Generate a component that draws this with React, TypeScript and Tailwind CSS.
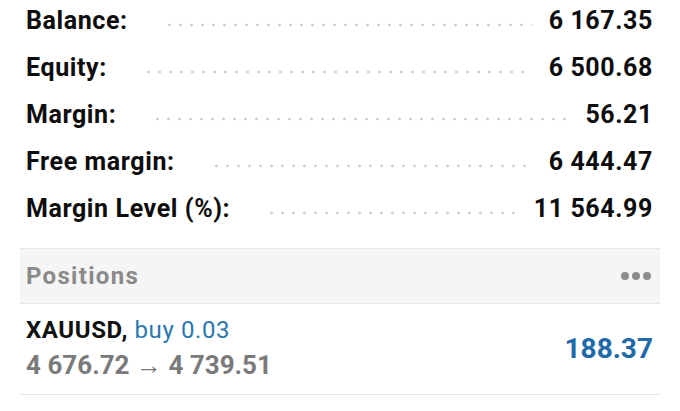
const rows = [
  { label: "Balance:", value: "6 167.35" },
  { label: "Equity:", value: "6 500.68" },
  { label: "Margin:", value: "56.21" },
  { label: "Free margin:", value: "6 444.47" },
  { label: "Margin Level (%):", value: "11 564.99" },
]

const Row = ({ label, value }: { label: string; value: string }) => (
  <div className="flex h-[47px] items-center">
    <span className="text-[25px] font-bold tracking-[0.6px] text-[#0d0d0d]">{label}</span>
    <div className="ml-[36px] mr-[17px] h-[8px] flex-1 translate-y-[4px] bg-[radial-gradient(circle,#d2d2d2_1.2px,transparent_1.7px)] bg-[length:11px_8px] bg-repeat-x" />
    <span className="text-[25px] font-bold tracking-[0.6px] text-[#0d0d0d]">{value}</span>
  </div>
)

export default function App() {
  return (
    <div className="h-[411px] w-[680px] overflow-hidden bg-white font-['Roboto',sans-serif]">
      <div className="-mt-[3px] pl-[26px] pr-[27px]">
        {rows.map((r) => (
          <Row key={r.label} {...r} />
        ))}
      </div>

      <div className="mx-[20px] mt-[16px] border-y border-[#e6e6e6] bg-[#f5f5f5]">
        <div className="flex h-[54px] items-center justify-between pl-[6px] pr-[9px]">
          <span className="text-[24px] font-bold tracking-[1.3px] text-[#8a8a8a]">Positions</span>
          <div className="flex gap-[3px]">
            <span className="h-[8px] w-[8px] rounded-full bg-[#8c8c8c]" />
            <span className="h-[8px] w-[8px] rounded-full bg-[#8c8c8c]" />
            <span className="h-[8px] w-[8px] rounded-full bg-[#8c8c8c]" />
          </div>
        </div>
      </div>

      <div className="mx-[20px] flex h-[91px] items-center justify-between border-b border-[#e6e6e6] pl-[6px] pr-[7px]">
        <div className="-mt-[2px] flex flex-col leading-[35px]">
          <div className="text-[24px] tracking-[0.6px]">
            <span className="font-bold text-[#111]">XAUUSD,</span>{" "}
            <span className="text-[#2b77ad]">buy 0.03</span>
          </div>
          <div className="text-[26px] font-bold text-[#7a7a7a]">4 676.72 → 4 739.51</div>
        </div>
        <span className="text-[28px] font-bold text-[#1f6aa8]">188.37</span>
      </div>
    </div>
  )
}
